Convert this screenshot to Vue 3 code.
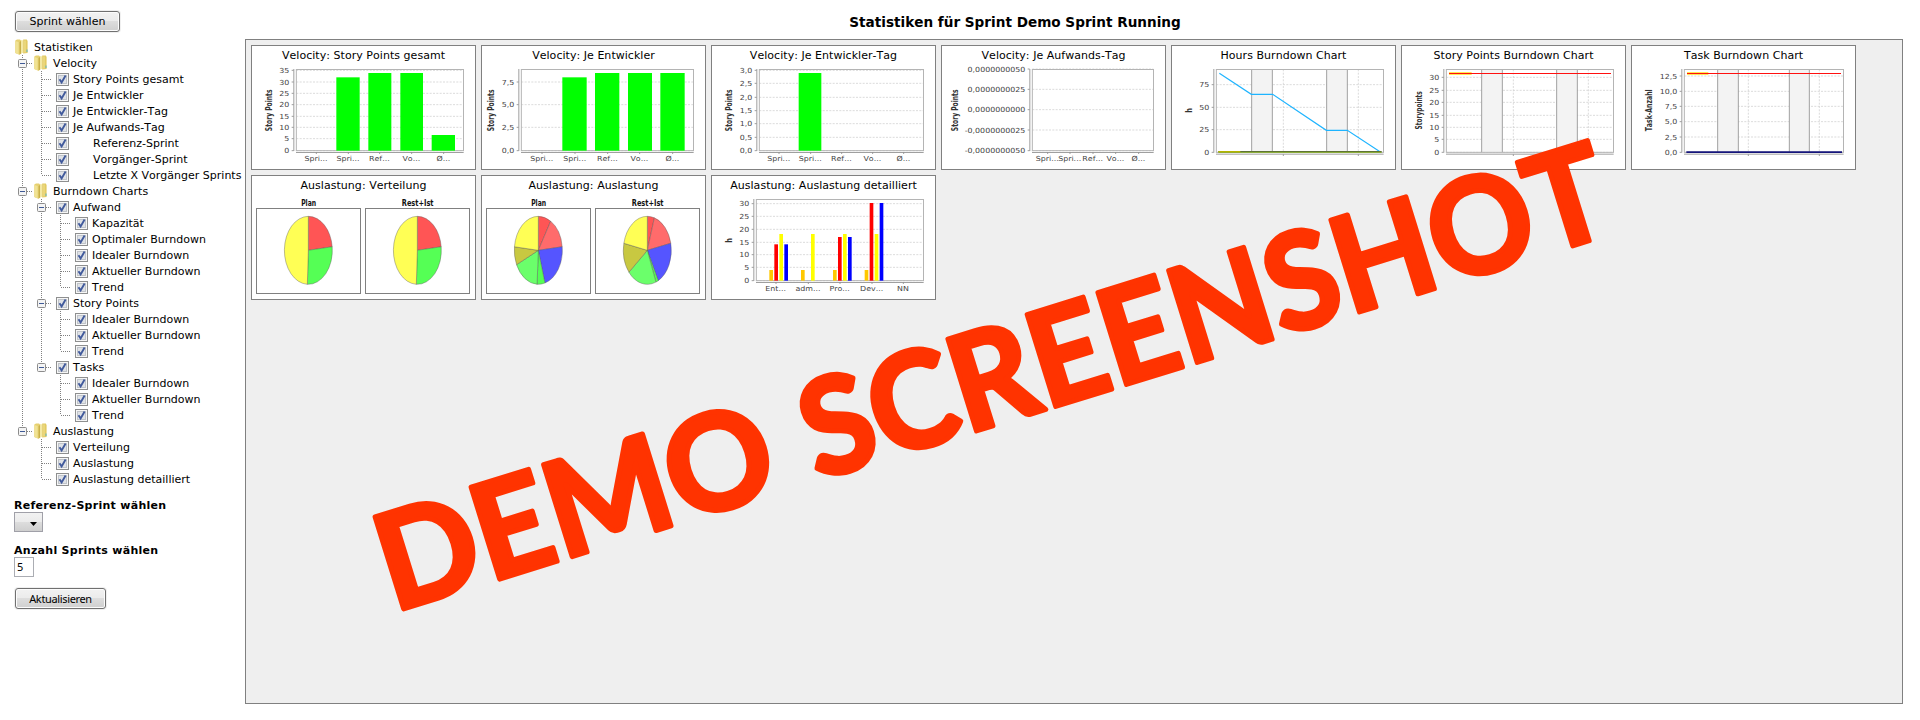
<script setup>
const T = (label, icon, cells, sub = false) => ({ label, icon, cells, sub })
// Guide cells: l line, t tee, e elbow, m toggle, n last toggle, b blank
const tree = [
  T('Statistiken', 'folder', ''),
  T('Velocity', 'folder', 'm'),
  T('Story Points gesamt', 'check', 'lt'),
  T('Je Entwickler', 'check', 'lt'),
  T('Je Entwickler-Tag', 'check', 'lt'),
  T('Je Aufwands-Tag', 'check', 'lt'),
  T('Referenz-Sprint', 'check', 'lt', true),
  T('Vorgänger-Sprint', 'check', 'lt', true),
  T('Letzte X Vorgänger Sprints', 'check', 'le', true),
  T('Burndown Charts', 'folder', 'm'),
  T('Aufwand', 'check', 'lm'),
  T('Kapazität', 'check', 'llt'),
  T('Optimaler Burndown', 'check', 'llt'),
  T('Idealer Burndown', 'check', 'llt'),
  T('Aktueller Burndown', 'check', 'llt'),
  T('Trend', 'check', 'lle'),
  T('Story Points', 'check', 'lm'),
  T('Idealer Burndown', 'check', 'llt'),
  T('Aktueller Burndown', 'check', 'llt'),
  T('Trend', 'check', 'lle'),
  T('Tasks', 'check', 'ln'),
  T('Idealer Burndown', 'check', 'lbt'),
  T('Aktueller Burndown', 'check', 'lbt'),
  T('Trend', 'check', 'lbe'),
  T('Auslastung', 'folder', 'n'),
  T('Verteilung', 'check', 'bt'),
  T('Auslastung', 'check', 'bt'),
  T('Auslastung detailliert', 'check', 'be'),
]

const names = ['Spri...', 'Spri...', 'Ref...', 'Vo...', 'Ø...']
const cats = (xs, labels = names) => xs.map((x, i) => ({ x, t: labels[i] }))
const green = (list) => list.map(([a, b, y]) => ({ a, b, y, c: '#00ff00' }))
const ticks = (o) => o.map(([t, y]) => ({ t, y }))
const group = (x, tops) =>
  tops.map((y, i) => ({ a: x + i * 15, b: x + i * 15 + 11, y, c: ['#ffc800', '#ff0000', '#ffff00', '#0000ff'][i] })).filter((b) => b.y)

const charts = [
  {
    title: 'Velocity: Story Points gesamt', left: 154, bottom: 344, label: 'Story Points', lx: 82, len: 125,
    ticks: ticks([['35', 103], ['30', 138], ['25', 172], ['20', 206], ['15', 241], ['10', 274], ['5', 308], ['0', 344]]),
    bars: green([[274, 344, 124], [370, 439, 111], [466, 534, 111], [560, 630, 297]]),
    cats: cats([213, 309, 403, 499, 595]),
  },
  {
    title: 'Velocity: Je Entwickler', left: 139, bottom: 344, label: 'Story Points', lx: 58, len: 125,
    ticks: ticks([['7,5', 138], ['5,0', 206], ['2,5', 274], ['0,0', 344]]),
    bars: green([[262, 335, 124], [360, 433, 111], [459, 531, 111], [556, 629, 111]]),
    cats: cats([200, 299, 397, 493, 592]),
  },
  {
    title: 'Velocity: Je Entwickler-Tag', left: 163, bottom: 344, label: 'Story Points', lx: 82, len: 125,
    ticks: ticks([['3,0', 103], ['2,5', 142], ['2,0', 184], ['1,5', 224], ['1,0', 263], ['0,5', 304], ['0,0', 344]]),
    bars: green([[281, 349, 111]]),
    cats: cats([221, 316, 409, 502, 595]),
  },
  {
    title: 'Velocity: Je Aufwands-Tag', left: 292, bottom: 344, label: 'Story Points', lx: 70, len: 125,
    ticks: ticks([['0,0000000050', 99], ['0,0000000025', 160], ['0,0000000000', 221], ['-0,0000000025', 282], ['-0,0000000050', 344]]),
    cats: cats([337, 404, 473, 541, 610]),
  },
  {
    title: 'Hours Burndown Chart', left: 154, bottom: 349, label: 'h', lx: 82, len: 14,
    ticks: ticks([['75', 146], ['50', 214], ['25', 281], ['0', 349]]),
    bands: [[260, 322], [485, 547]], days: [355, 580],
    lines: [
      { p: '163,112 259,175 323,175 484,283 547,283 645,347', c: '#1eb4ff', w: 3.4 },
      { p: '160,347 650,347', c: '#5a6a3c', w: 4 },
      { p: '160,349 650,349', c: '#7fae10', w: 2.5 },
      { p: '160,347 226,347', c: '#b4b400', w: 4 },
    ],
  },
  {
    title: 'Story Points Burndown Chart', left: 154, bottom: 349, label: 'Storypoints', lx: 82, len: 115,
    ticks: ticks([['30', 124], ['25', 163], ['20', 199], ['15', 238], ['10', 274], ['5', 310], ['0', 349]]),
    bands: [[260, 322], [485, 547]], days: [355, 580],
    lines: [
      { p: '162,112.5 230,112.5', c: '#ffe62e', w: 8 },
      { p: '162,112.5 648,112.5', c: '#ff1010', w: 3 },
    ],
  },
  {
    title: 'Task Burndown Chart', left: 178, bottom: 349, label: 'Task-Anzahl', lx: 82, len: 126,
    ticks: ticks([['12,5', 120], ['10,0', 166], ['7,5', 211], ['5,0', 257], ['2,5', 303], ['0,0', 349]]),
    bands: [[278, 340], [493, 553]], days: [370, 583],
    lines: [
      { p: '186,112.5 250,112.5', c: '#ffe62e', w: 8 },
      { p: '186,112.5 648,112.5', c: '#ff1010', w: 3 },
      { p: '184,348.5 651,348.5', c: '#14147a', w: 5 },
    ],
  },
  {
    title: 'Auslastung: Verteilung',
    pies: [
      { t: 'Plan', w: 45, x: 190, s: [[84, '#ff5555'], [182.4, '#55ff55'], [360, '#ffff55']] },
      { t: 'Rest+Ist', w: 95, x: 517, s: [[84, '#ff5555'], [182.4, '#55ff55'], [360, '#ffff55']] },
    ],
  },
  {
    title: 'Auslastung: Auslastung',
    pies: [
      { t: 'Plan', w: 45, x: 190, s: [[31, '#ff5555'], [84, '#ff6b6b'], [164, '#5555ff'], [183, '#55ff55'], [245, '#6bff6b'], [276, '#c8c841'], [360, '#ffff55']] },
      { t: 'Rest+Ist', w: 95, x: 517, s: [[17, '#ff5555'], [78, '#ff6b6b'], [153, '#5555ff'], [159, '#55ff55'], [230, '#6bff6b'], [282, '#c8c841'], [360, '#ffff55']] },
    ],
  },
  {
    title: 'Auslastung: Auslastung detailliert', left: 154, bottom: 344, label: 'h', lx: 82, len: 14,
    ticks: ticks([['30', 113], ['25', 151], ['20', 190], ['15', 229], ['10', 266], ['5', 304], ['0', 344]]),
    bars: [...group(193, [312, 235, 204, 235]), ...group(288, [312, 0, 204, 0]), ...group(384, [312, 213, 204, 213]), ...group(479, [312, 111, 204, 111])],
    cats: cats([212, 309, 404, 500, 594], ['Ent...', 'adm...', 'Pro...', 'Dev...', 'NN']),
  },
]

const at = (cx, deg) => {
  const r = (deg * Math.PI) / 180
  return `${(cx + 72 * Math.sin(r)).toFixed(1)},${(253 - 102 * Math.cos(r)).toFixed(1)}`
}
const slice = (pie, i) => {
  const from = i ? pie.s[i - 1][0] : 0
  const to = pie.s[i][0]
  return `M${pie.x},253 L${at(pie.x, from)} A72,102 0 ${to - from > 180 ? 1 : 0} 1 ${at(pie.x, to)} Z`
}
</script>

<template>
  <div class="page">
    <aside class="side">
      <button class="btn wide">Sprint wählen</button>
      <ul class="tree">
        <li v-for="(n, i) in tree" :key="i" class="row">
          <svg v-for="(c, k) in n.cells" :key="k" class="cell" width="19" height="16" viewBox="0 0 19 16">
            <path v-if="'ltm'.includes(c)" class="dots" d="M9.5 0V16" />
            <path v-if="'en'.includes(c)" class="dots" d="M9.5 0V8" />
            <path v-if="'temn'.includes(c)" class="dots" d="M10 8.5H19" />
            <template v-if="'mn'.includes(c)">
              <rect x="5.5" y="4.5" width="8" height="8" rx="1" fill="#f4f4f4" stroke="#8c8c8c" />
              <path d="M7 8.5H12" stroke="#3f5a96" />
            </template>
          </svg>
          <svg v-if="n.icon === 'folder'" class="ficon" width="14" height="16" viewBox="0 0 14 16">
            <path d="M0.3 1.5 L2 0.5 H5 L6 1.5 V14.5 L4.5 15.8 L0.3 14Z" fill="#e6d070" />
            <path d="M0.3 2 L3.6 3 V15.4 L0.3 14Z" fill="#f0e294" />
            <path d="M4.6 3 L6.6 1.6 V14 L4.6 15.8Z" fill="#c9b04a" />
            <path d="M6 1.2 H8.4 V13.8 L6 14.2Z" fill="#f3e8a4" />
            <path d="M8.2 0.5 H11.8 L12.6 2 V14 L8.2 14.5Z" fill="#e2ca62" />
            <path d="M9 1.4 H11 V13.6 H9Z" fill="#ead67a" />
            <path d="M12 10.5V13" stroke="#58b4c8" />
          </svg>
          <svg v-else class="cicon" width="13" height="13" viewBox="0 0 13 13">
            <rect x="0.5" y="0.5" width="12" height="12" fill="#f6f6f6" stroke="#8e8f8f" />
            <rect x="2.5" y="2.5" width="8" height="8" fill="#dfe2e6" stroke="#c0c4ca" />
            <path d="M3.5 6.3L5.6 9.4L9.6 2.6" fill="none" stroke="#415a9c" stroke-width="1.9" />
          </svg>
          <span class="name" :class="{ sub: n.sub }">{{ n.label }}</span>
        </li>
      </ul>
      <h2 class="field">Referenz-Sprint wählen</h2>
      <div class="select">
        <svg width="7" height="4" viewBox="0 0 7 4"><path d="M0 0H7L3.5 4Z" fill="#000" /></svg>
      </div>
      <h2 class="field">Anzahl Sprints wählen</h2>
      <div class="input">5</div>
      <button class="btn narrow">Aktualisieren</button>
    </aside>

    <main class="main">
      <h1 class="heading">Statistiken für Sprint Demo Sprint Running</h1>
      <section class="panel">
        <article v-for="c in charts" :key="c.title" class="card">
          <div class="title">{{ c.title }}</div>
          <svg width="223" height="107" viewBox="21 78 669 321">
            <template v-if="c.pies">
              <g v-for="p in c.pies" :key="p.t">
                <text :x="p.x + 1" y="119" class="ptitle" text-anchor="middle" :textLength="p.w" lengthAdjust="spacingAndGlyphs">{{ p.t }}</text>
                <rect :x="p.x - 155.5" y="127.5" width="312" height="255" fill="#fff" stroke="#808080" stroke-width="3" />
                <path v-for="(s, i) in p.s" :key="i" :d="slice(p, i)" :fill="s[1]" stroke="#555" stroke-opacity="0.6" stroke-width="2" />
              </g>
            </template>
            <template v-else>
              <g v-for="t in c.ticks" :key="t.t">
                <path :d="`M${c.left} ${t.y}H655`" class="grid" />
                <path :d="`M${c.left - 14} ${t.y}H${c.left - 8}`" class="axis" />
                <text :transform="`translate(${c.left - 21} ${t.y + 7.5}) scale(1.13 1)`" class="num" text-anchor="end">{{ t.t }}</text>
              </g>
              <g v-for="d in c.days" :key="d">
                <path :d="`M${d} 100V${c.bottom}`" class="grid" />
                <path :d="`M${d} ${c.bottom + 6}v5`" class="axis" />
              </g>
              <template v-for="b in c.bands" :key="b[0]">
                <rect :x="b[0]" y="100" :width="b[1] - b[0]" :height="c.bottom - 100" fill="#f3f3f3" />
                <path :d="`M${b[0]} 100V${c.bottom}M${b[1]} 100V${c.bottom}`" stroke="#a0a0a0" stroke-width="3" />
              </template>
              <rect :x="c.left" y="100.5" :width="655.5 - c.left" :height="c.bottom - 100.5" fill="none" stroke="#b4b4b4" stroke-width="3" />
              <rect v-for="(b, i) in c.bars" :key="i" :x="b.a" :y="b.y" :width="b.b - b.a" :height="c.bottom - b.y" :fill="b.c" />
              <path :d="`M${c.left - 7.5} 99V${c.bottom + 1}M${c.left - 1} ${c.bottom + 5.5}H656`" class="axis" />
              <g v-for="(k, i) in c.cats" :key="i">
                <path :d="`M${k.x + 1} ${c.bottom + 5}v5`" class="axis" />
                <text :transform="`translate(${k.x} 374) scale(1.13 1)`" class="num" text-anchor="middle">{{ k.t }}</text>
              </g>
              <polyline v-for="(l, i) in c.lines" :key="i" :points="l.p" fill="none" :stroke="l.c" :stroke-width="l.w" />
              <text :transform="`translate(${c.lx} 223) rotate(-90)`" class="ylab" text-anchor="middle" :textLength="c.len" lengthAdjust="spacingAndGlyphs">{{ c.label }}</text>
            </template>
          </svg>
        </article>
      </section>
    </main>

    <svg class="stamp" width="1920" height="720" viewBox="0 0 1920 720">
      <g transform="translate(393.5 612) rotate(-17.25)">
        <text textLength="408" lengthAdjust="spacingAndGlyphs">DEMO</text>
        <text x="444" textLength="838" lengthAdjust="spacingAndGlyphs">SCREENSHOT</text>
      </g>
    </svg>
  </div>
</template>

<style scoped>
.page {
  position: relative;
  display: flex;
  width: 1920px;
  height: 720px;
  overflow: hidden;
  background: #fff;
  color: #000;
  font-family: "DejaVu Sans", sans-serif;
  font-size: 11px;
  font-kerning: none;
}
.side {
  width: 245px;
  flex: none;
  padding: 11px 0 0 13px;
  box-sizing: border-box;
}
.btn {
  display: block;
  height: 21px;
  margin: 0 0 0 2px;
  padding: 0;
  border: 1px solid #707070;
  border-radius: 3px;
  background: linear-gradient(#f2f2f2, #ebebeb 50%, #dddddd 50%, #cfcfcf);
  box-shadow: 0 0 0 1px #f0f0f0, inset 0 0 0 1px #fcfcfc;
  font-family: inherit;
  font-size: 11px;
  color: #000;
  white-space: nowrap;
}
.wide {
  width: 105px;
}
.narrow {
  width: 91px;
  margin-top: 11px;
  font-family: "Noto Sans", sans-serif;
  font-size: 11px;
  letter-spacing: -0.35px;
}
.tree {
  margin: 7px 0 0;
  padding: 0;
  list-style: none;
}
.row {
  display: flex;
  align-items: center;
  height: 16px;
  white-space: nowrap;
}
.cell {
  flex: none;
}
.dots {
  stroke: #808080;
  stroke-dasharray: 1 1;
  fill: none;
}
.ficon {
  flex: none;
  margin: 0 5px 0 2px;
}
.cicon {
  flex: none;
  margin: 0 4px 0 5px;
}
.name {
  height: 16px;
  line-height: 18px;
}
.sub {
  padding-left: 20px;
}
.field {
  height: 15px;
  margin: 10px 0 0 1px;
  font-size: 11px;
  font-weight: bold;
  letter-spacing: 0.28px;
  line-height: 17px;
  white-space: nowrap;
}
.select {
  display: flex;
  align-items: center;
  justify-content: flex-end;
  width: 29px;
  height: 20px;
  margin: 0 0 0 1px;
  padding: 3px 5px 0 0;
  box-sizing: border-box;
  border: 1px solid #a0a0a8;
  background: linear-gradient(#f2f2f2, #ebebeb 50%, #dddddd 50%, #cfcfcf);
}
.input {
  width: 20px;
  height: 20px;
  margin-left: 1px;
  padding-left: 2px;
  box-sizing: border-box;
  border: 1px solid #abadb3;
  font: 11px/18px "Noto Sans", sans-serif;
}
.main {
  width: 1658px;
  display: flex;
  flex-direction: column;
}
.heading {
  height: 39px;
  margin: 0;
  padding-right: 118px;
  font-size: 13.6px;
  line-height: 44px;
  text-align: center;
  white-space: nowrap;
}
.panel {
  display: flex;
  flex-wrap: wrap;
  align-content: flex-start;
  gap: 5px;
  height: 665px;
  padding: 5px;
  box-sizing: border-box;
  border: 1px solid #808080;
  background: #efefef;
}
.card {
  display: flex;
  flex-direction: column;
  width: 225px;
  height: 125px;
  box-sizing: border-box;
  border: 1px solid #808080;
  background: #fff;
}
.title {
  height: 16px;
  line-height: 19px;
  letter-spacing: 0.04px;
  text-align: center;
  white-space: nowrap;
}
.num {
  font-size: 21px;
  fill: #444;
}
.ylab {
  font-size: 28px;
  font-weight: bold;
  fill: #333;
}
.ptitle {
  font-size: 26px;
  font-weight: bold;
  fill: #111;
}
.grid {
  stroke: #d4d4d4;
  stroke-width: 2.5;
  stroke-dasharray: 6 4;
}
.axis {
  stroke: #8c8c8c;
  stroke-width: 2.5;
  fill: none;
}
.stamp {
  position: absolute;
  left: 0;
  top: 0;
  pointer-events: none;
}
.stamp text {
  font-family: Lato, sans-serif;
  font-size: 133px;
  font-weight: bold;
  fill: #ff3300;
  stroke: #ff3300;
  stroke-width: 5px;
  stroke-linejoin: round;
}
</style>

<style>
body {
  margin: 0;
  background: #fff;
}
</style>
